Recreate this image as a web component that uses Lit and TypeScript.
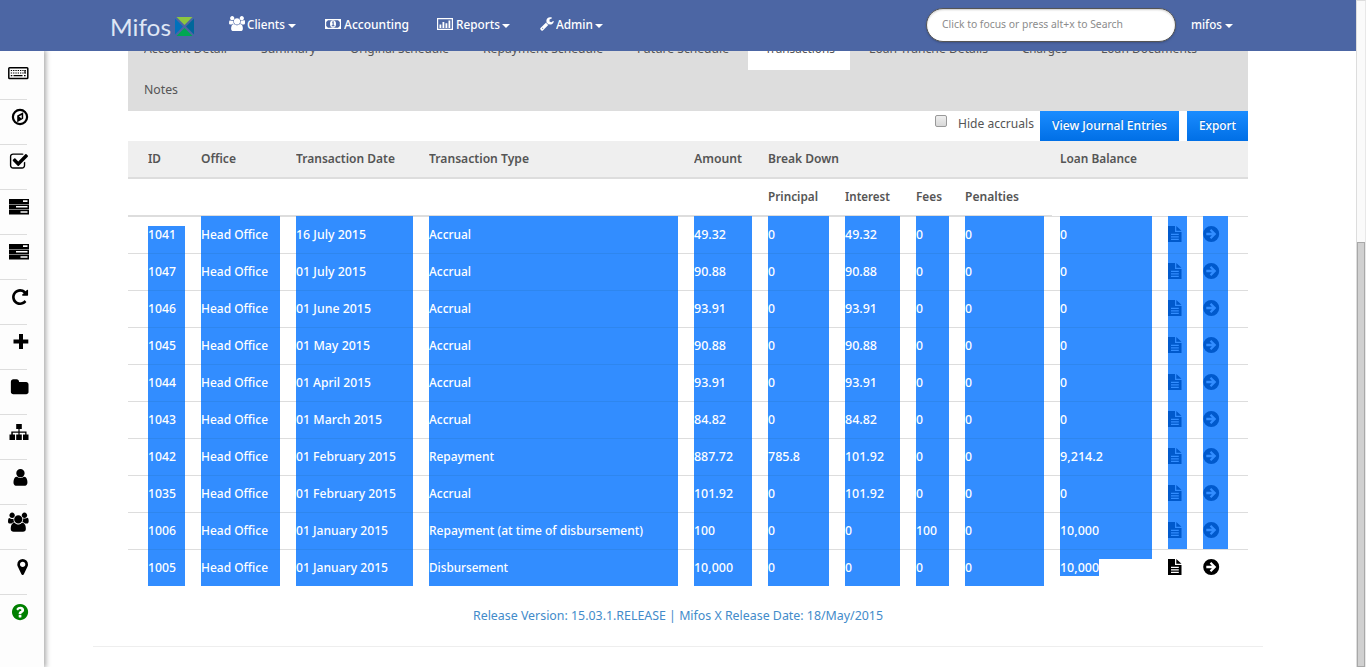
import { LitElement, html, css, svg } from "lit";
import { customElement, property } from "lit/decorators.js";

/** One line of text condensed or widened to a given advance width. */
@customElement("fit-text")
class FitText extends LitElement {
  @property({ type: Number }) w = 0;
  @property() text = "";
  static styles = css`
    :host { display: inline-block; white-space: nowrap; vertical-align: top; }
    span { display: inline-block; transform-origin: 0 50%; }
  `;
  render() { return html`<span>${this.text}</span>`; }
  updated() {
    const s = this.renderRoot.querySelector("span") as HTMLElement;
    this.style.width = this.w + "px";
    const natural = s.getBoundingClientRect().width;
    if (natural && !s.style.transform) s.style.transform = `scaleX(${this.w / natural})`;
  }
}
const t = (text: string, w: number) => html`<fit-text .text=${text} .w=${w}></fit-text>`;

const P = {
  users: "M593 896q-162 5-265 128h-134q-82 0-138-40.5t-56-118.5q0-353 124-353 6 0 43.5 21t97.5 42.5 119 21.5q67 0 133-23-5 37-5 66 0 159 93 293zm1071 637q0 120-73 189.5t-194 69.5h-874q-121 0-194-69.5t-73-189.5q0-53 3.5-103.5t14-109 26.5-108.5 43-97.5 62-81 85.5-53.5 111.5-20q10 0 43 21.5t73 48 107 48 135 21.5 135-21.5 107-48 73-48 43-21.5q61 0 111.5 20t85.5 53.5 62 81 43 97.5 26.5 108.5 14 109 3.5 103.5zm-1024-1277q0 106-75 181t-181 75-181-75-75-181 75-181 181-75 181 75 75 181zm704 384q0 159-112.5 271.5t-271.5 112.5-271.5-112.5-112.5-271.5 112.5-271.5 271.5-112.5 271.5 112.5 112.5 271.5zm576 225q0 78-56 118.5t-138 40.5h-134q-103-123-265-128 93-134 93-293 0-29-5-66 66 23 133 23 59 0 119-21.5t97.5-42.5 43.5-21q124 0 124 353zm-128-609q0 106-75 181t-181 75-181-75-75-181 75-181 181-75 181 75 75 181z",
  wrench: "M448 1472q0-26-19-45t-45-19-45 19-19 45 19 45 45 19 45-19 19-45zm644-420l-682 682q-37 37-90 37-52 0-91-37l-106-108q-38-36-38-90 0-53 38-91l681-681q39 98 114.5 173.5t173.5 114.5zm634-435q0 39-23 106-47 134-164.5 217.5t-258.5 83.5q-185 0-316.5-131.5t-131.5-316.5 131.5-316.5 316.5-131.5q58 0 121.5 16.5t107.5 46.5q16 11 16 28t-16 28l-293 169v224l193 107q5-3 79-48.5t135.5-81 70.5-35.5q15 0 23.5 10t8.5 25z",
  question: "M1024 1376v-192q0-14-9-23t-23-9h-192q-14 0-23 9t-9 23v192q0 14 9 23t23 9h192q14 0 23-9t9-23zm256-672q0-88-55.5-163t-138.5-116-170-41q-243 0-371 213-15 24 8 42l132 100q7 6 19 6 16 0 25-12 53-68 86-92 34-24 86-24 48 0 85.5 26t37.5 59q0 38-20 61t-68 45q-63 28-115.5 86.5t-52.5 125.5v36q0 14 9 23t23 9h192q14 0 23-9t9-23q0-19 21.5-49.5t54.5-49.5q32-18 49-28.5t46-35 44.5-48 28-60.5 12.5-81zm384 192q0 209-103 385.5t-279.5 279.5-385.5 103-385.5-103-279.5-279.5-103-385.5 103-385.5 279.5-279.5 385.5-103 385.5 103 279.5 279.5 103 385.5z",
  folder: "M1728 608v704q0 92-66 158t-158 66h-1216q-92 0-158-66t-66-158v-960q0-92 66-158t158-66h320q92 0 158 66t66 158v32h672q92 0 158 66t66 158z",
  repeat: "M1664 256v448q0 26-19 45t-45 19h-448q-42 0-59-40-17-39 14-69l138-138q-148-137-349-137-104 0-198.5 40.5t-163.5 109.5-109.5 163.5-40.5 198.5 40.5 198.5 109.5 163.5 163.5 109.5 198.5 40.5q119 0 225-52t179-147q7-10 23-12 15 0 25 9l137 138q9 8 9.5 20.5t-7.5 22.5q-109 132-264 204.5t-327 72.5q-156 0-298-61t-245-164-164-245-61-298 61-298 164-245 245-164 298-61q147 0 284.5 55.5t244.5 156.5l130-129q29-31 70-14 39 17 39 59z",
  marker: "M1152 640q0-106-75-181t-181-75-181 75-75 181 75 181 181 75 181-75 75-181zm256 0q0 109-33 179l-364 774q-16 33-47.5 52t-67.5 19-67.5-19-46.5-52l-365-774q-33-70-33-179 0-212 150-362t362-150 362 150 150 362z",
  user: "M1536 1399q0 109-62.5 187t-150.5 78h-854q-88 0-150.5-78t-62.5-187q0-85 8.5-160.5t31.5-152 58.5-131 94-89 134.5-34.5q131 128 313 128t313-128q76 0 134.5 34.5t94 89 58.5 131 31.5 152 8.5 160.5zm-256-887q0 159-112.5 271.5t-271.5 112.5-271.5-112.5-112.5-271.5 112.5-271.5 271.5-112.5 271.5 112.5 112.5 271.5z",
  check: "M1472 930v318q0 119-84.5 203.5t-203.5 84.5h-832q-119 0-203.5-84.5t-84.5-203.5v-832q0-119 84.5-203.5t203.5-84.5h832q63 0 117 25 15 7 18 23 3 17-9 29l-49 49q-10 10-23 10-3 0-9-2-23-6-45-6h-832q-66 0-113 47t-47 113v832q0 66 47 113t113 47h832q66 0 113-47t47-113v-254q0-13 9-22l64-64q10-10 23-10 6 0 12 3 20 8 20 29zm231-489l-814 814q-24 24-57 24t-57-24l-430-430q-24-24-24-57t24-57l110-110q24-24 57-24t57 24l263 263 647-647q24-24 57-24t57 24l110 110q24 24 24 57t-24 57z",
};

/** Sidebar glyphs share a 44x44 cell so that every icon keeps its own offset. */
const glyph = (d: string, x: number, y: number, s: number) =>
  svg`<path d=${d} transform="translate(${x} ${y}) scale(${s / 1792})"/>`;

const tasks = svg`<path d="M9 14h20v5H9zM9 19.500h20v5H9zM9 25h20v4.500H9z"/><path fill="#fdfdfd" d="M23 15.200h4.500v1.800H23zM16 21h11.500v1.500H16zM20.500 26.200h7v1.500h-7z"/>`;

const SIDE = [
  svg`<rect x="8.800" y="17.700" width="19" height="10.800" rx=".8" fill="none" stroke="#000" stroke-width="1.500"/><path fill="none" stroke="#000" stroke-width="1.200" stroke-dasharray="1.300 1" d="M10.800 20.500h15M10.800 23h15"/><path stroke="#000" stroke-width="1.200" d="M10.800 25.600h1.500M13.500 25.600h9M24 25.600h1.600M25 20v3.500"/>`,
  svg`<circle cx="20" cy="22" r="7.100" fill="none" stroke="#000" stroke-width="2.200"/><path fill-rule="evenodd" d="M23.200 17.200v6.600l-6 3.400v-6.700zM21.700 20l-2.800 1.600 2.800 2z"/>`,
  glyph(P.check, 9.2, 12, 19.5),
  tasks,
  tasks,
  glyph(P.repeat, 10.7, 12.7, 18.7),
  svg`<path d="M19 14h4v5.500h5.300v4H23v5.500h-4v-5.500h-5.500v-4H19z"/>`,
  glyph(P.folder, 10.2, 13, 19),
  svg`<path d="M16.200 14h5.600v5h-2.200v2.500h6.900v3H28.500V30h-5.500v-5.500h2.200v-1.700h-5.600v1.700h2.200V30h-5.600v-5.500h2.200v-1.700h-5.600v1.700h2.200V30H9.500v-5.500h1.800v-3h7.100V19h-2.200z"/>`,
  glyph(P.user, 10.700, 12.6, 19.500),
  glyph(P.users, 8, 12.600, 19.200),
  glyph(P.marker, 13.3, 12.7, 18.7),
  svg`<g fill="#008000">${glyph(P.question, 10.6, 12.6, 18.900)}</g>`,
];

const docIcon = html`<svg width="15" height="16" viewBox="0 0 15 16"><path fill-rule="evenodd" d="M0 0h7v6h6.500v10H0zM8.300 0l5.200 4.700H8.300zM3 7.700v1.300h7.800V7.700zM3 10.200v1.300h7.800v-1.300zM3 12.700V14h7.800v-1.300z"/></svg>`;
const arrowIcon = html`<svg width="17" height="16" viewBox="0 0 17 16"><path fill-rule="evenodd" d="M8.200 0a8 8 0 1 1 0 16a8 8 0 0 1 0-16zM8.300 2.900L6.700 4.500l2.200 2.300H3.300v2.500h5.600l-2.200 2.200 1.600 1.600 5-5.100z"/></svg>`;
const caret = html`<svg class="caret" width="8" height="4" viewBox="0 0 8 4"><path d="M0 0h8L4 4z"/></svg>`;

type Cell = [string, number];
const OFFICE: Cell = ["Head Office", 67];
const ACCRUAL: Cell = ["Accrual", 42];
const num = (s: string): Cell => {
  const narrow = (s.match(/[.,]/g) || []).length;
  return [s, (s.length - narrow) * 7 + narrow * 4];
};
const row = (id: string, date: Cell, type: Cell, ...n: string[]): Cell[] => [[id, 28], OFFICE, date, type, ...n.map(num)];
const ROWS: Cell[][] = [
  row("1041", ["16 July 2015", 70], ACCRUAL, "49.32", "0", "49.32", "0", "0", "0"),
  row("1047", ["01 July 2015", 70], ACCRUAL, "90.88", "0", "90.88", "0", "0", "0"),
  row("1046", ["01 June 2015", 75], ACCRUAL, "93.91", "0", "93.91", "0", "0", "0"),
  row("1045", ["01 May 2015", 74], ACCRUAL, "90.88", "0", "90.88", "0", "0", "0"),
  row("1044", ["01 April 2015", 75], ACCRUAL, "93.91", "0", "93.91", "0", "0", "0"),
  row("1043", ["01 March 2015", 86], ACCRUAL, "84.82", "0", "84.82", "0", "0", "0"),
  row("1042", ["01 February 2015", 100], ["Repayment", 65], "887.72", "785.8", "101.92", "0", "0", "9,214.2"),
  row("1035", ["01 February 2015", 100], ACCRUAL, "101.92", "0", "101.92", "0", "0", "0"),
  row("1006", ["01 January 2015", 92], ["Repayment (at time of disbursement)", 214], "100", "0", "0", "100", "0", "10,000"),
  row("1005", ["01 January 2015", 92], ["Disbursement", 79], "10,000", "0", "0", "0", "0", "10,000"),
];

@customElement("app-root")
class AppRoot extends LitElement {
  static styles = css`
    :host { display: flex; width: 1366px; height: 667px; overflow: hidden; background: #fff; font: 13px/18px "Noto Sans", "Open Sans", sans-serif; color: #555; }
    * { box-sizing: border-box; }
    svg { display: block; flex: none; }
    .page { width: 1356px; height: 667px; display: flex; flex-direction: column; }
    .nav { height: 51px; flex: none; background: #4c66a4; color: #fff; fill: #fff; display: flex; align-items: center; padding: 0 0 4px 110px; font-weight: 500; }
    .item { display: flex; align-items: center; height: 18px; }
    .caret { margin: 4px 0 0 3px; }
    .brand { display: flex; align-items: center; width: 119px; gap: 4px; font: 400 24px/30px Lato, sans-serif; color: #dfe6f5; padding-top: 6px; }
    .clients { width: 96px; gap: 2px; }
    .accounting { width: 112px; gap: 2px; }
    .accounting svg { margin-right: 1px; }
    .reports { width: 103px; gap: 3px; }
    .admin { width: 386px; gap: 2px; }
    .clients .caret { margin-left: 1px; }
    .reports .caret { margin-left: -1px; }
    .admin .caret { margin-left: 0; }
    .search { width: 250px; height: 34px; border: 1px solid #555; border-radius: 17px; background: #fff; box-shadow: inset 0 1px 2px #ccc, 0 1px 2px #3d5285; color: #8c8c8c; font-size: 11px; font-weight: 400; line-height: 16px; padding: 7px 15px; margin: 3px 15px 0 0; }
    .body { display: flex; flex: 1; min-height: 0; }
    .side { width: 44px; flex: none; padding-top: 4px; background: #fdfdfd; box-shadow: 1px 0 5px 1px #aaa; clip-path: inset(0 -8px 0 0); }
    .cell { height: 45px; border-bottom: 1px solid #ddd; border-image: linear-gradient(90deg, #ddd 27px, transparent 27px) 1; }
    .cell:last-child { border: none; }
    .main { width: 1120px; margin-left: 84px; }
    .tabs { height: 60px; background: #ddd; overflow: hidden; color: #555; }
    .line { display: flex; height: 41px; margin-top: -22px; }
    .tab { height: 41px; padding: 10px 18px 0 16px; flex: none; }
    .tab.on { background: #fff; width: 102px; padding-left: 17px; margin: 0 3px 0 1px; }
    .tools { height: 30px; display: flex; justify-content: flex-end; align-items: flex-start; }
    .box { width: 12px; height: 12px; border: 1px solid #999; border-radius: 2px; background: linear-gradient(#eee, #d8d8d8); margin: 4px 11px 0 0; }
    .hide { margin: 3px 6px 0 0; }
    .btn { height: 30px; padding: 5px 12px; color: #fff; font-weight: 500; background: linear-gradient(#1a8cff, #006fe6); text-shadow: 0 -1px 0 rgba(0,0,0,.2); margin-right: 8px; }
    .btn:last-child { margin-right: 0; }
    .row { display: grid; grid-template-columns: 37px 79px 117px 249px 58px 61px 55px 33px 79px 92px 19px 25px; column-gap: 16px; padding: 0 20px; }
    .head { height: 38px; background: #efefef; border-bottom: 2px solid #ddd; font-weight: 600; padding-top: 8px; }
    .sub { height: 37px; font-weight: 600; padding-top: 8px; background: linear-gradient(#ddd, #ddd) 0 100% / 924px 1px no-repeat; }
    .sub fit-text:first-child { grid-column: 6; }
    .data { height: 37px; background: linear-gradient(#ddd, #ddd) 0 0 / 100% 1px no-repeat; }
    .sel { height: 37px; background: #328dff; border-top: 1px solid #2e86ee; color: #fff; font-weight: 500; padding-top: 8px; white-space: nowrap; fill: #0059cc; }
    .sel.icon { padding-top: 9px; }
    .data.first .sel { border-top-color: #328dff; }
    .data.first .sel:first-child { background: linear-gradient(#328dff, #328dff) 0 9px / 100% 100% no-repeat; border-top-color: transparent; }
    .sel.partial { background: linear-gradient(#328dff, #328dff) 0 0 / 100% 9px no-repeat, linear-gradient(#328dff, #328dff) 0 0 / 39px 26px no-repeat; }
    .sel.none { background: none; border-top-color: transparent; fill: #000; }
    .foot { width: 1170px; height: 61px; margin-left: -35px; border-bottom: 1px solid #eee; padding: 20px 0 0 380px; color: #428bca; }
    .scroll { width: 10px; background: #fafafa; border-left: 1px solid #ddd; border-right: 1px solid #e8e8e8; border-top: 1px solid #ddd; padding-top: 241px; }
    .thumb { height: 425px; background: #d0d0d0; border: 1px solid #a8a8a8; }
  `;

  render() {
    const tab = (s: string, w: number, on = false) => html`<div class="tab ${on ? "on" : ""}">${t(s, w)}</div>`;
    return html`
      <div class="page">
        <div class="nav">
          <div class="brand">${t("Mifos", 61)}
            <svg width="19" height="19" viewBox="0 0 19 19"><path fill="#8cc63f" d="M1.500 0h16l-8 8z"/><path fill="#0071bc" d="M0 1.500l8 8-8 8z"/><path fill="#00679b" d="M19 1.500l-8 8 8 8z"/><path fill="#00a651" d="M1.500 19h16l-8-8z"/></svg>
          </div>
          <div class="item clients"><svg width="16" height="15" viewBox="0 0 1920 1792"><path d=${P.users}/></svg>${t("Clients", 38)}${caret}</div>
          <div class="item accounting"><svg width="16" height="10" viewBox="0 0 16 10"><path fill-rule="evenodd" d="M0 0h16v10H0zM3 1.200L1.200 3v4L3 8.800h10L14.800 7V3L13 1.200z"/><ellipse cx="8" cy="5" rx="3" ry="3.700"/><path fill="#4c66a4" d="M7 3l1-.700h.7v4h.8v.9H6.700v-.9h.9V3.400H7z"/></svg>${t("Accounting", 65)}</div>
          <div class="item reports"><svg width="16" height="12" viewBox="0 0 16 12"><path fill-rule="evenodd" d="M0 0h16v12H0zM1.200 1.200v9.600h13.600V1.200z"/><path d="M2.500 6.500h1.800V10H2.500zM5.500 4h1.800v6H5.500zM8.500 5.200h1.800V10H8.500zM11.500 2.500h1.800V10h-1.800z"/></svg>${t("Reports", 44)}${caret}</div>
          <div class="item admin"><svg width="14" height="14" viewBox="60 100 1700 1700"><path d=${P.wrench}/></svg>${t("Admin", 37)}${caret}</div>
          <div class="search">${t("Click to focus or press alt+x to Search", 181)}</div>
          <div class="item">${t("mifos", 31)}${caret}</div>
        </div>
        <div class="body">
          <div class="side">${SIDE.map(g => html`<div class="cell"><svg width="44" height="44" viewBox="0 5 44 44">${g}</svg></div>`)}</div>
          <div class="main">
            <div class="tabs">
              <div class="line">${tab("Account Detail", 83)}${tab("Summary", 55)}${tab("Original Schedule", 99)}${tab("Repayment Schedule", 120)}${tab("Future Schedule", 92)}${tab("Transactions", 70, true)}${tab("Loan Tranche Details", 119)}${tab("Charges", 45)}${tab("Loan Documents", 96)}</div>
              <div class="tab">${t("Notes", 34)}</div>
            </div>
            <div class="tools">
              <div class="box"></div><div class="hide">${t("Hide accruals", 76)}</div>
              <div class="btn">${t("View Journal Entries", 115)}</div>
              <div class="btn">${t("Export", 37)}</div>
            </div>
            <div class="row head">${t("ID", 13)}${t("Office", 35)}${t("Transaction Date", 99)}${t("Transaction Type", 100)}${t("Amount", 48)}${t("Break Down", 71)}<span></span><span></span><span></span>${t("Loan Balance", 77)}</div>
            <div class="row sub">${t("Principal", 50)}${t("Interest", 45)}${t("Fees", 26)}${t("Penalties", 54)}</div>
            ${ROWS.map((r, i) => {
              const last = i === ROWS.length - 1;
              return html`<div class="row data ${i === 0 ? "first" : ""}">
                ${r.map(([s, w], c) => html`<div class="sel ${last && c === 9 ? "partial" : ""}">${t(s, w)}</div>`)}
                <div class="sel icon ${last ? "none" : ""}">${docIcon}</div>
                <div class="sel icon ${last ? "none" : ""}">${arrowIcon}</div>
              </div>`;
            })}
            <div class="foot">${t("Release Version: 15.03.1.RELEASE | Mifos X Release Date: 18/May/2015", 410)}</div>
          </div>
        </div>
      </div>
      <div class="scroll"><div class="thumb"></div></div>
    `;
  }
}
